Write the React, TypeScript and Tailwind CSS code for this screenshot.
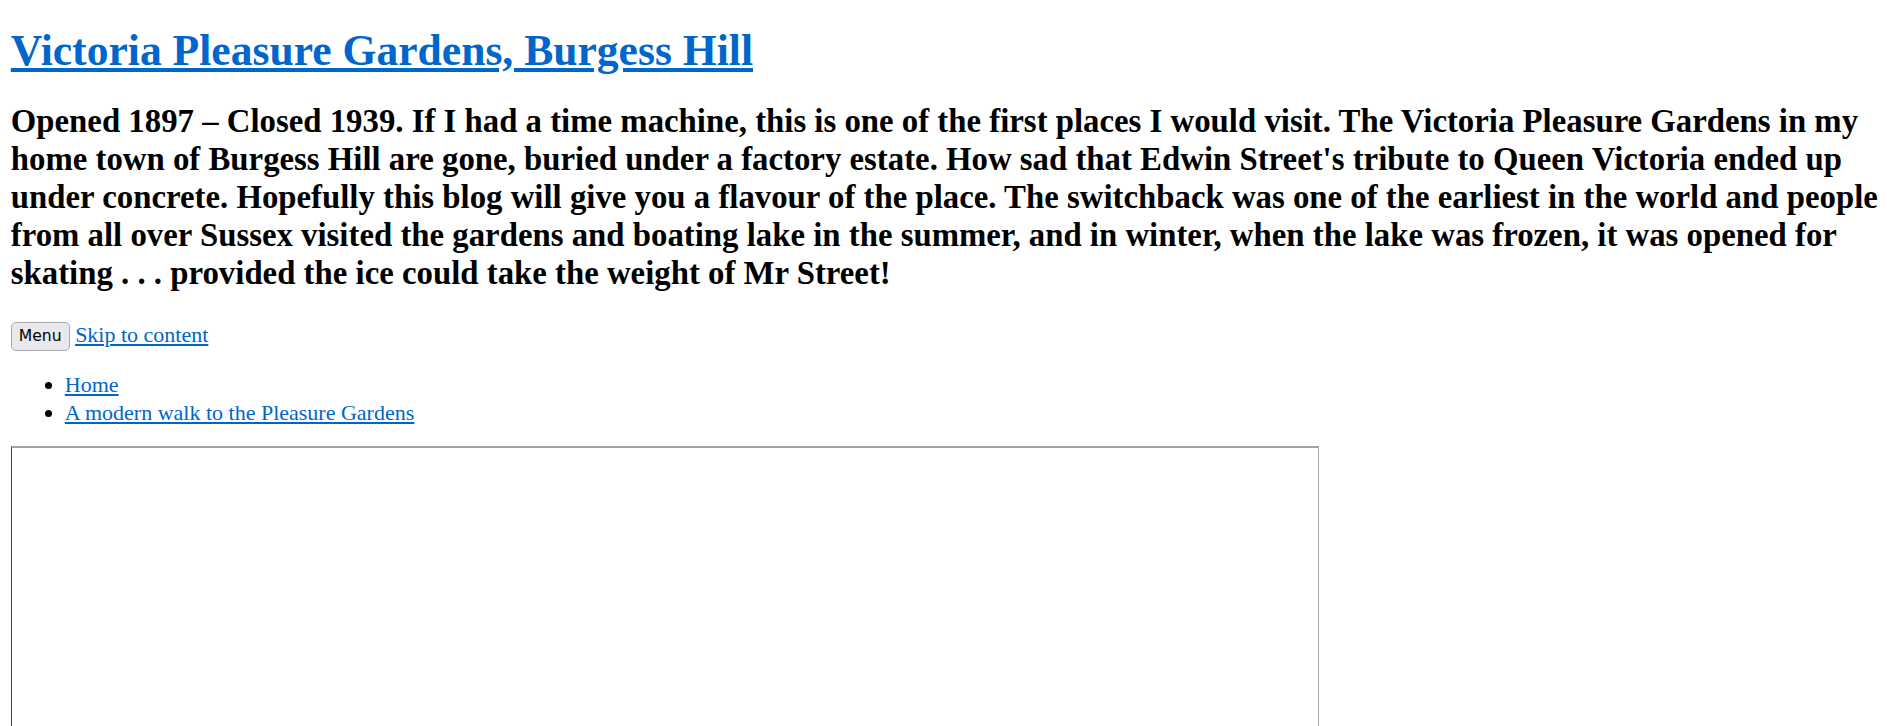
export default function App() {
  const links = ['Home', 'A modern walk to the Pleasure Gardens'];

  return (
    <div className="min-h-screen bg-white pl-[10.8px] pr-[6px] font-['Liberation_Serif','Times_New_Roman',serif] text-black">
      <h1 className="pt-[25px] text-[43.6px] font-bold leading-[normal]">
        <a href="#" className="text-[#0066cc] underline">
          Victoria Pleasure Gardens, Burgess Hill
        </a>
      </h1>

      <p className="mt-[27px] text-[32.8px] font-bold leading-[38px]">
        Opened 1897 – Closed 1939. If I had a time machine, this is one of the first places I would visit. The
        Victoria Pleasure Gardens in my home town of Burgess Hill are gone, buried under a factory estate. How sad
        that Edwin Street's tribute to Queen Victoria ended up under concrete. Hopefully this blog will give you a
        flavour of the place. The switchback was one of the earliest in the world and people from all over Sussex
        visited the gardens and boating lake in the summer, and in winter, when the lake was frozen, it was opened
        for skating . . . provided the ice could take the weight of Mr Street!
      </p>

      <div className="mt-[30px] text-[22px] leading-[normal]">
        <button className="rounded-[5px] border border-[#a9a9b2] bg-[#e9e9ed] px-[7px] py-[3px] align-middle font-['DejaVu_Sans',sans-serif] text-[15.6px] leading-[21px] text-black">
          Menu
        </button>{' '}
        <a href="#" className="text-[#0066cc] underline">
          Skip to content
        </a>
      </div>

      <ul className="mt-[20px] list-disc pl-[54px] text-[22px] leading-[27.6px]">
        {links.map((l) => (
          <li key={l}>
            <a href="#" className="text-[#0066cc] underline">
              {l}
            </a>
          </li>
        ))}
      </ul>

      <div className="mt-[19px] h-[400px] w-[1308px] border-t-[2px] border-r border-l border-t-[#a3a3a3] border-r-[#a9a9a9] border-l-[#3f3f3f] bg-white" />
    </div>
  );
}
